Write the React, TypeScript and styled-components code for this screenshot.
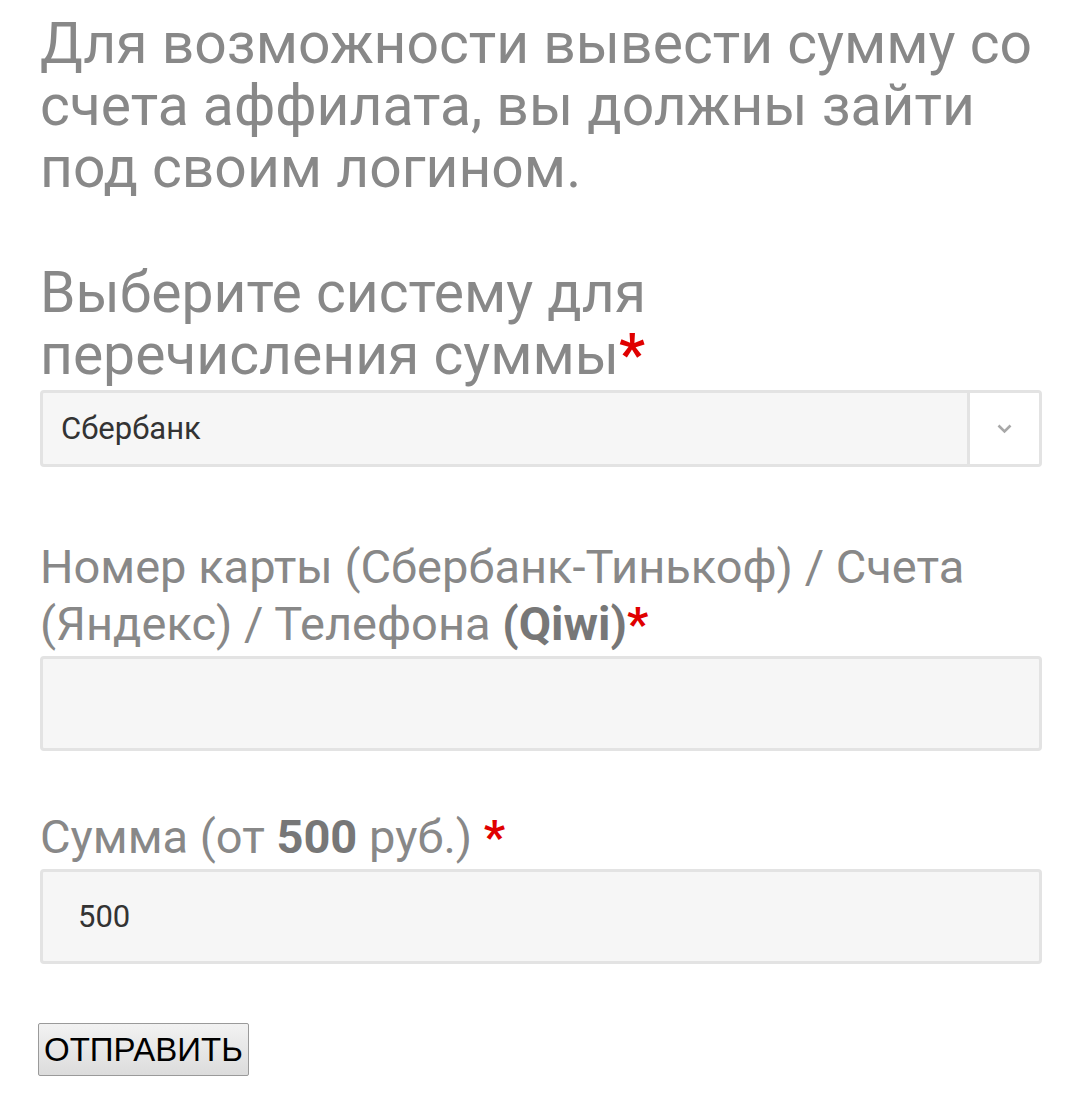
import React from "react";
import styled, {createGlobalStyle} from "styled-components";

const GlobalStyle = createGlobalStyle`
  body {
    margin: 0;
    background: #fff;
    font-family: Roboto, "Noto Sans", sans-serif;
  }
`;

const Page = styled.form`
  display: flex;
  flex-direction: column;
  padding: 13px 38px 30px 40px;
  color: #888;
`;

const Heading = styled.h2<{ $width?: number }>`
  margin: 0;
  max-width: ${p => p.$width ? `${p.$width}px` : "none"};
  font-size: 57px;
  line-height: 62px;
  font-weight: 400;
  color: #888;
`;

const Notice = styled(Heading)`
  margin-bottom: 63px;
`;

const Star = styled.span`
  color: #e00000;
  font-weight: 700;
`;

const Field = styled.div<{ $top: number }>`
  display: flex;
  flex-direction: column;
  gap: 4px;
  margin-top: ${p => p.$top}px;
`;

const Label = styled.label`
  font-size: 47px;
  line-height: 57px;
  color: #888;
  b {
    color: #777;
  }
`;

const SelectBox = styled.div`
  display: flex;
  height: 77px;
  margin-top: 4px;
  box-sizing: border-box;
  border: 3px solid #e3e3e3;
  border-radius: 4px;
  background: #f6f6f6;
  overflow: hidden;
`;

const SelectValue = styled.div`
  flex: 1;
  display: flex;
  align-items: center;
  padding-left: 18px;
  font-size: 31px;
  color: #333;
`;

const SelectArrow = styled.div`
  width: 69px;
  background: #fff;
  border-left: 3px solid #e3e3e3;
  display: flex;
  align-items: center;
  justify-content: center;
`;

const TextInput = styled.input`
  height: 95px;
  box-sizing: border-box;
  border: 3px solid #e3e3e3;
  border-radius: 4px;
  background: #f6f6f6;
  padding: 0 35px;
  font-family: Roboto, sans-serif;
  font-size: 31px;
  color: #333;
  outline: none;
`;

const Submit = styled.button`
  align-self: flex-start;
  margin: 59px 0 0 -2px;
  height: 53px;
  padding: 0 5px;
  font-family: "Liberation Sans", Arial, sans-serif;
  font-size: 33px;
  color: #000;
  border: 1px solid #9a9a9a;
  border-radius: 2px;
  background: linear-gradient(#f2f2f2, #dcdcdc);
`;

const App = () => {
    return <>
        <GlobalStyle/>
        <Page onSubmit={e => e.preventDefault()}>
            <Notice>Для возможности вывести сумму со счета аффилата, вы должны зайти под своим логином.</Notice>
            <Heading $width={990}>Выберите систему для перечисления суммы<Star>*</Star></Heading>
            <SelectBox>
                <SelectValue>Сбербанк</SelectValue>
                <SelectArrow>
                    <svg width="15" height="10" viewBox="0 0 15 10">
                        <path d="M1.5 1.5 L7.5 7.5 L13.5 1.5" fill="none" stroke="#a8a8a8" strokeWidth="2.6"/>
                    </svg>
                </SelectArrow>
            </SelectBox>
            <Field $top={71}>
                <Label>Номер карты (Сбербанк-Тинькоф) / Счета (Яндекс) / Телефона <b>(Qiwi)</b><Star>*</Star></Label>
                <TextInput type="text"/>
            </Field>
            <Field $top={57}>
                <Label>Сумма (от <b>500</b> руб.) <Star>*</Star></Label>
                <TextInput type="text" defaultValue="500"/>
            </Field>
            <Submit type="submit">ОТПРАВИТЬ</Submit>
        </Page>
    </>
}

export default App;
